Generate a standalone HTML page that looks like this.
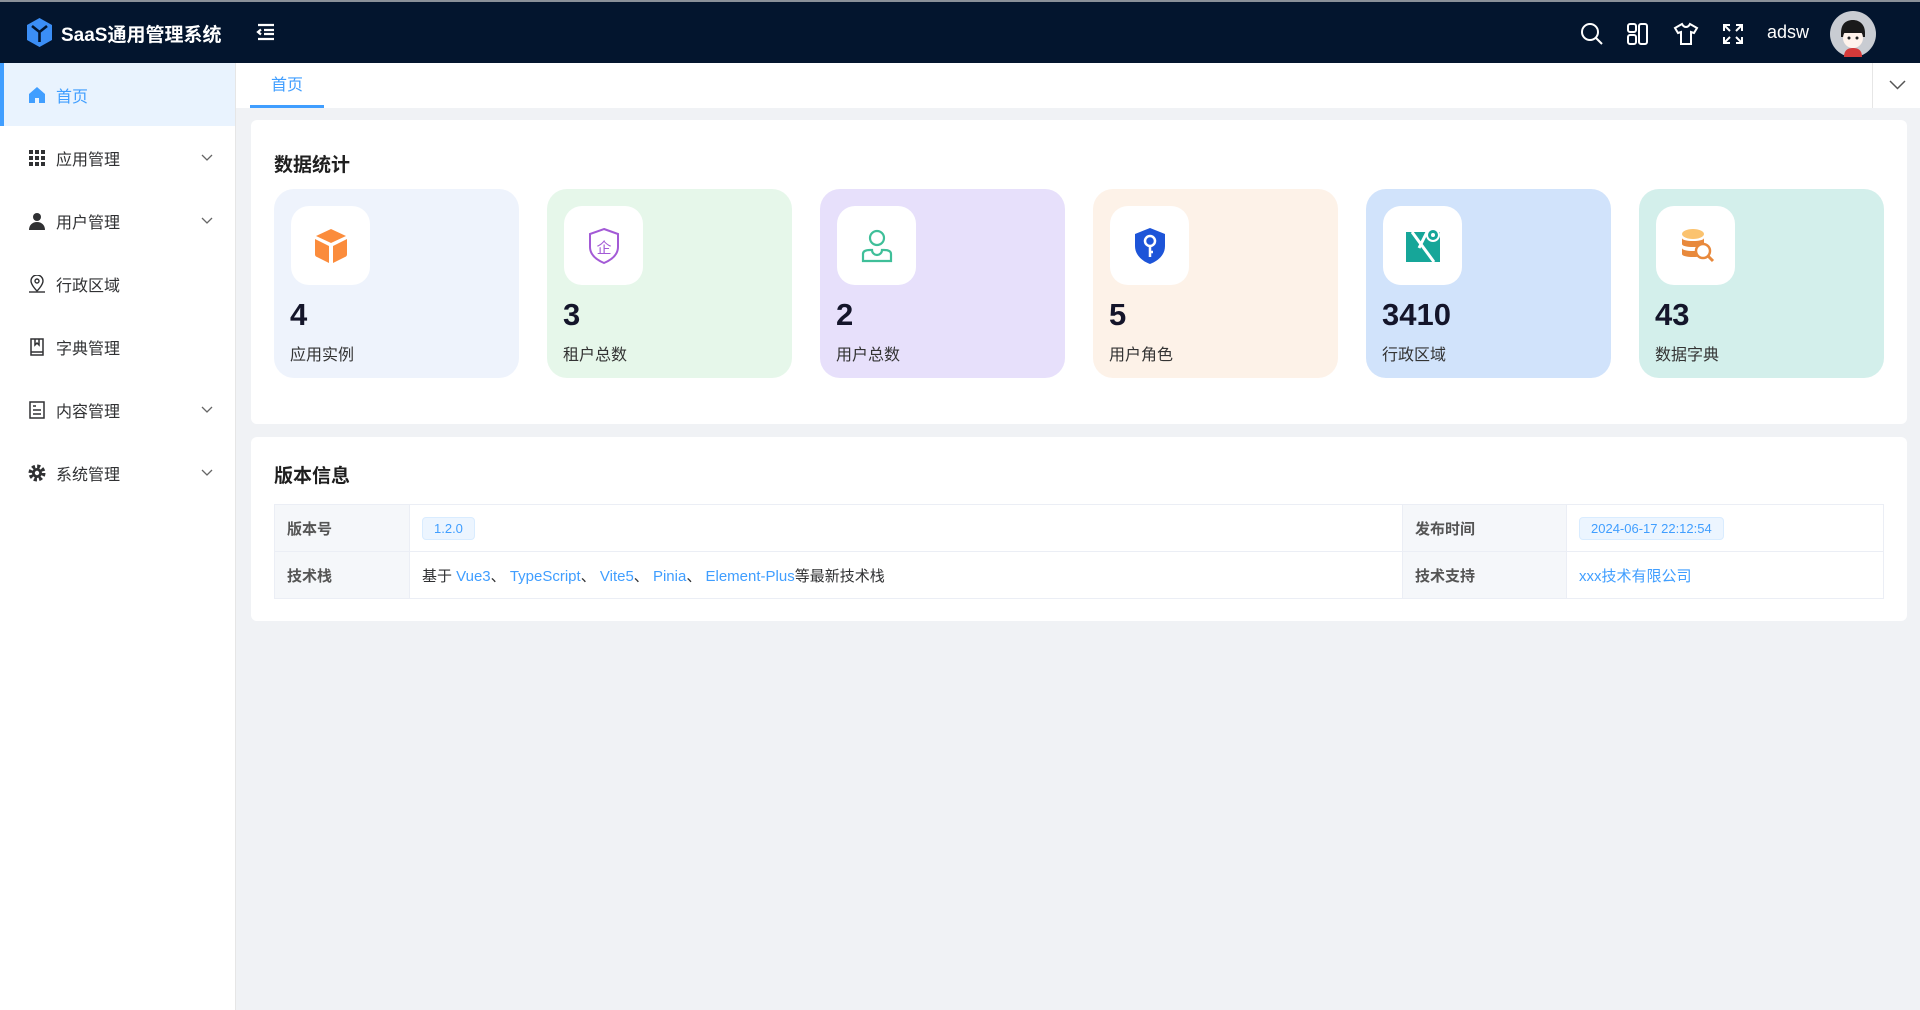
<!DOCTYPE html>
<html><head><meta charset="utf-8">
<style>
*{margin:0;padding:0;box-sizing:border-box}
body{width:1920px;height:1010px;overflow:hidden;background:#f0f2f5;font-family:"Liberation Sans","Noto Sans CJK SC",sans-serif;position:relative;color:#303133}
.hdr{position:absolute;left:0;top:0;width:1920px;height:63px;background:#03152e;border-top:2px solid #8a9099}
.logo{position:absolute;left:26px;top:15px}
.title{position:absolute;left:61px;top:18px;color:#fff;font-size:19px;font-weight:bold}
.side{position:absolute;left:0;top:63px;width:236px;height:947px;background:#fff;border-right:1px solid #e6e6e6}
.item{height:63px;display:flex;align-items:center;padding-left:28px;font-size:16px;color:#303133;position:relative}
.item svg{margin-right:10px}
.item.act{background:#e9f3fe;color:#409eff;border-left:4px solid #409eff;padding-left:24px}
.arr{position:absolute;right:12px;top:28px}
.tabs{position:absolute;left:236px;top:63px;width:1684px;height:45px;background:#fff}
.tab{position:absolute;left:14px;top:0;width:74px;height:45px;color:#409eff;font-size:16px;text-align:center;line-height:46px;border-bottom:3px solid #409eff}
.tabr{position:absolute;right:0;top:0;width:48px;height:45px;border-left:1px solid #e6e6e6}
.card{position:absolute;left:251px;width:1656px;background:#fff;border-radius:6px}
.h{position:absolute;left:23px;font-size:19px;font-weight:bold;color:#1f1f1f}
.stat{position:absolute;top:69px;width:245px;height:189px;border-radius:20px}
.ib{position:absolute;left:17px;top:17px;width:79px;height:79px;background:#fff;border-radius:18px;display:flex;align-items:center;justify-content:center}
.num{position:absolute;left:16px;top:108px;font-size:31px;font-weight:bold;color:#14152a}
.lbl{position:absolute;left:16px;top:152px;font-size:16px;color:#333}
table{position:absolute;left:23px;top:67px;width:1610px;border-collapse:collapse;font-size:15px}
td{border:1px solid #ebeef5;height:47px;padding:0 12px}
td.k{background:#f5f7fa;font-weight:bold;color:#555}
.tag{display:inline-block;background:#ecf5ff;border:1px solid #d9ecff;color:#409eff;border-radius:4px;font-size:13px;padding:3px 11px}
a{color:#409eff;text-decoration:none}
</style></head><body>
<div class="hdr">
<svg class="logo" width="27" height="31" viewBox="0 0 27 31"><path d="M13.5 1L26 8v15l-12.5 7L1 23V8z" fill="#3b8ef6"/><path d="M6 9l7.5 6 7.5-6M13.5 15v10" stroke="#03152e" stroke-width="2.6" fill="none"/></svg>
<div class="title">SaaS通用管理系统</div>
<svg style="position:absolute;left:256px;top:21px" width="20" height="18" viewBox="0 0 20 18"><path d="M2 2h16M8 7h10M8 11h10M2 16h16M5 6.5L2 9l3 2.5" stroke="#fff" stroke-width="2.2" fill="none"/></svg>
<svg style="position:absolute;left:1580px;top:20px" width="24" height="24" viewBox="0 0 24 24"><circle cx="10" cy="10" r="8" stroke="#fff" stroke-width="2" fill="none"/><path d="M16 16l6 6" stroke="#fff" stroke-width="2"/></svg>
<svg style="position:absolute;left:1627px;top:21px" width="22" height="22" viewBox="0 0 22 22" fill="none" stroke="#fff" stroke-width="2"><rect x="1" y="1" width="8" height="8" rx="2"/><rect x="1" y="12" width="8" height="9" rx="2"/><rect x="12" y="1" width="8" height="20" rx="2"/></svg>
<svg style="position:absolute;left:1673px;top:20px" width="26" height="24" viewBox="0 0 26 24" fill="none" stroke="#fff" stroke-width="2"><path d="M9 2L2 6l3 5 3-1v12h10V10l3 1 3-5-7-4c-1 2-2.5 3-4 3S10 4 9 2z"/></svg>
<svg style="position:absolute;left:1722px;top:21px" width="22" height="22" viewBox="0 0 22 22" fill="none" stroke="#fff" stroke-width="2"><path d="M2 8V2h6M2 2l6 6M14 2h6v6M20 2l-6 6M2 14v6h6M2 20l6-6M20 14v6h-6M20 20l-6-6"/></svg>
<div style="position:absolute;left:1767px;top:20px;color:#fff;font-size:18px">adsw</div>
<svg style="position:absolute;left:1830px;top:9px" width="46" height="46" viewBox="0 0 46 46"><circle cx="23" cy="23" r="23" fill="#c9ccd2"/><path d="M11 22c0-10 6-13 12-13s12 4 12 13v4H11z" fill="#1a1a1a"/><ellipse cx="23" cy="27" rx="10" ry="10" fill="#fff3ec"/><path d="M12 22c3-4 8-6 12-6 4 0 8 2 10 6" fill="#1a1a1a"/><circle cx="19" cy="27" r="1.5" fill="#222"/><circle cx="27" cy="27" r="1.5" fill="#222"/><path d="M14 46c0-7 4-9 9-9s9 2 9 9z" fill="#d63a3a"/></svg>
</div>

<div class="side">
<div class="item act"><svg width="18" height="18" viewBox="0 0 18 18"><path d="M9 1L1 8v9h6v-5h4v5h6V8z" fill="#409eff"/></svg>首页</div>
<div class="item"><svg width="18" height="18" viewBox="0 0 18 18" fill="#303133"><rect x="1" y="1" width="4" height="4"/><rect x="7" y="1" width="4" height="4"/><rect x="13" y="1" width="4" height="4"/><rect x="1" y="7" width="4" height="4"/><rect x="7" y="7" width="4" height="4"/><rect x="13" y="7" width="4" height="4"/><rect x="1" y="13" width="4" height="4"/><rect x="7" y="13" width="4" height="4"/><rect x="13" y="13" width="4" height="4"/></svg>应用管理<svg class="arr" width="12" height="8" viewBox="0 0 12 8"><path d="M1 1l5 5 5-5" stroke="#666" fill="none" stroke-width="1.3"/></svg></div>
<div class="item"><svg width="18" height="18" viewBox="0 0 18 18" fill="#303133"><circle cx="9" cy="5" r="4"/><path d="M1 18c0-5 3.5-8 8-8s8 3 8 8z"/></svg>用户管理<svg class="arr" width="12" height="8" viewBox="0 0 12 8"><path d="M1 1l5 5 5-5" stroke="#666" fill="none" stroke-width="1.3"/></svg></div>
<div class="item"><svg width="18" height="18" viewBox="0 0 18 18" fill="none" stroke="#303133" stroke-width="1.4"><path d="M9 16s-6-6-6-10a6 6 0 0112 0c0 4-6 10-6 10z"/><circle cx="9" cy="6" r="2"/><path d="M1 17h16"/></svg>行政区域</div>
<div class="item"><svg width="18" height="18" viewBox="0 0 18 18" fill="none" stroke="#303133" stroke-width="1.5"><path d="M3 1h12v16H3z M3 14h12M7 1v6l2-2 2 2V1"/></svg>字典管理</div>
<div class="item"><svg width="18" height="18" viewBox="0 0 18 18" fill="none" stroke="#303133" stroke-width="1.5"><rect x="2" y="1" width="14" height="16"/><path d="M5 5h3M5 9h8M5 13h8"/></svg>内容管理<svg class="arr" width="12" height="8" viewBox="0 0 12 8"><path d="M1 1l5 5 5-5" stroke="#666" fill="none" stroke-width="1.3"/></svg></div>
<div class="item"><svg width="18" height="18" viewBox="0 0 18 18"><circle cx="9" cy="9" r="6.5" fill="none" stroke="#303133" stroke-width="4" stroke-dasharray="3 2.1"/><circle cx="9" cy="9" r="5" fill="#303133"/><circle cx="9" cy="9" r="2.2" fill="#fff"/></svg>系统管理<svg class="arr" width="12" height="8" viewBox="0 0 12 8"><path d="M1 1l5 5 5-5" stroke="#666" fill="none" stroke-width="1.3"/></svg></div>
</div>

<div class="tabs"><div class="tab">首页</div><div class="tabr"><svg style="position:absolute;left:16px;top:17px" width="17" height="10" viewBox="0 0 17 10"><path d="M1 1l7.5 7.5L16 1" stroke="#555" fill="none" stroke-width="1.5"/></svg></div></div>

<div class="card" style="top:120px;height:304px">
<div class="h" style="top:30px">数据统计</div>
<div class="stat" style="left:23px;background:#eef3fc"><div class="ib"><svg width="40" height="40" viewBox="0 0 40 40"><path d="M20 3l15 7-15 7-15-7z" fill="#fb8c3c"/><path d="M4 13l14 7v17L6 31a3 3 0 01-2-3z" fill="#fb8c3c"/><path d="M36 13l-14 7v17l12-6a3 3 0 002-3z" fill="#fb8c3c"/></svg></div><div class="num">4</div><div class="lbl">应用实例</div></div>
<div class="stat" style="left:296px;background:#e6f7ea"><div class="ib"><svg width="36" height="38" viewBox="0 0 36 38"><path d="M18 2l14 5v13c0 8-7 13-14 16C11 33 4 28 4 20V7z" fill="none" stroke="#a35ad6" stroke-width="2"/><text x="18" y="26" text-anchor="middle" font-size="15" fill="#a35ad6" font-family="Noto Sans CJK SC">企</text></svg></div><div class="num">3</div><div class="lbl">租户总数</div></div>
<div class="stat" style="left:569px;background:#e7e0fb"><div class="ib"><svg width="36" height="38" viewBox="0 0 36 38" fill="none" stroke="#3fbf99" stroke-width="2.2"><circle cx="18" cy="11" r="7"/><path d="M4 34v-7c0-3 3-4 7-4h2a5 5 0 0010 0h2c4 0 7 1 7 4v7z"/></svg></div><div class="num">2</div><div class="lbl">用户总数</div></div>
<div class="stat" style="left:842px;background:#fdf2e8"><div class="ib"><svg width="36" height="40" viewBox="0 0 36 40"><path d="M18 2l15 6v12c0 9-7 15-15 18C10 35 3 29 3 20V8z" fill="#1d54d8"/><circle cx="18" cy="15" r="5" fill="none" stroke="#fff" stroke-width="2.5"/><path d="M18 20v11M18 26h3" stroke="#fff" stroke-width="2.5"/></svg></div><div class="num">5</div><div class="lbl">用户角色</div></div>
<div class="stat" style="left:1115px;background:#d1e3fb"><div class="ib"><svg width="40" height="40" viewBox="0 0 40 40"><path d="M3 6h34v30H3z" fill="#16a699"/><path d="M9 6l22 30M24 6l-8 16" stroke="#fff" stroke-width="3"/><circle cx="30" cy="9" r="6" fill="#16a699" stroke="#fff" stroke-width="2"/><circle cx="30" cy="9" r="2" fill="#fff"/></svg></div><div class="num">3410</div><div class="lbl">行政区域</div></div>
<div class="stat" style="left:1388px;background:#d3efeb"><div class="ib"><svg width="40" height="40" viewBox="0 0 40 40"><ellipse cx="17" cy="8" rx="11" ry="5" fill="#fbc36f"/><path d="M6 12c0 4 22 4 22 0v6c0 4-22 4-22 0zM6 22c0 4 22 4 22 0v6c0 4-22 4-22 0z" fill="#e8893c"/><circle cx="27" cy="25" r="7" fill="#fff" stroke="#e8893c" stroke-width="2.5"/><path d="M32 30l5 5" stroke="#e8893c" stroke-width="3"/></svg></div><div class="num">43</div><div class="lbl">数据字典</div></div>
</div>

<div class="card" style="top:437px;height:184px">
<div class="h" style="top:24px">版本信息</div>
<table>
<tr><td class="k" style="width:135px">版本号</td><td style="width:993px"><span class="tag">1.2.0</span></td><td class="k" style="width:164px">发布时间</td><td><span class="tag">2024-06-17 22:12:54</span></td></tr>
<tr><td class="k">技术栈</td><td>基于 <a>Vue3</a>、 <a>TypeScript</a>、 <a>Vite5</a>、 <a>Pinia</a>、 <a>Element-Plus</a>等最新技术栈</td><td class="k">技术支持</td><td><a>xxx技术有限公司</a></td></tr>
</table>
</div>
</body></html>
